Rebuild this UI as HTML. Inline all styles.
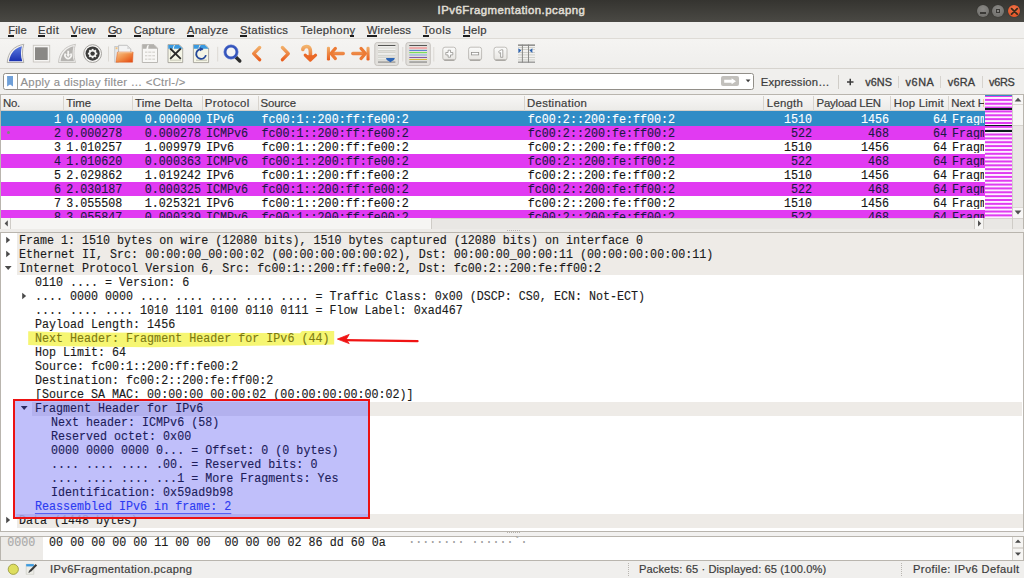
<!DOCTYPE html><html><head><meta charset="utf-8"><style>
*{margin:0;padding:0;box-sizing:border-box}
html,body{width:1024px;height:578px;overflow:hidden;background:#f2f1f0;position:relative}
body{font-family:"Liberation Sans",sans-serif}
.a{position:absolute}
.t{position:absolute;white-space:pre;font-family:"Liberation Sans",sans-serif}
.m{position:absolute;white-space:pre;font-family:"Liberation Mono",monospace;font-size:11.6962px;line-height:14px;-webkit-text-stroke:0.12px currentColor;transform:scaleY(1.1);transform-origin:0 10.12px}
</style></head><body>

<div class="a" style="left:0;top:0;width:1024px;height:22px;background:linear-gradient(#353430,#4a4944)"></div>
<div class="t" style="left:437.6px;top:4.29px;font-size:11.400px;line-height:13.11px;letter-spacing:0.458px;color:#dfdbd2;-webkit-text-stroke:0.55px currentColor;">IPv6Fragmentation.pcapng</div>
<div class="a" style="left:976.5px;top:4.7px;width:12.5px;height:12.5px;border-radius:50%;background:radial-gradient(circle at 50% 35%,#8a8986,#6b6a66);box-shadow:0 0 1px #2a2a28"></div>
<div class="a" style="left:979.5px;top:12px;width:6.5px;height:1.6px;background:#3a3936"></div>
<div class="a" style="left:991.8px;top:4.7px;width:12.5px;height:12.5px;border-radius:50%;background:radial-gradient(circle at 50% 35%,#8a8986,#6b6a66);box-shadow:0 0 1px #2a2a28"></div>
<div class="a" style="left:995.8px;top:8.6px;width:4.6px;height:4.6px;border:1.4px solid #3a3936"></div>
<div class="a" style="left:1007.6px;top:4.7px;width:12.6px;height:12.6px;border-radius:50%;background:radial-gradient(circle at 50% 35%,#f0744a,#df4b1c);box-shadow:0 0 1px #2a2a28"></div>
<svg class="a" style="left:1007.6px;top:4.7px" width="13" height="13"><path d="M3.6 3.6L9.2 9.2M9.2 3.6L3.6 9.2" stroke="#3a2a1a" stroke-width="1.7" stroke-linecap="round"/></svg>
<div class="a" style="left:0;top:22px;width:1024px;height:16.5px;background:#f0efed"></div>
<div class="a" style="left:0;top:38px;width:1024px;height:1px;background:#dedbd6"></div>
<div class="t" style="left:8.25px;top:23.79px;font-size:11.300px;line-height:12.99px;letter-spacing:0.098px;color:#3c3c3c;-webkit-text-stroke:0.2px currentColor;">File</div>
<div class="a" style="left:8.25px;top:35.3px;width:6.00px;height:1.3px;background:#1e1e1e"></div>
<div class="t" style="left:38px;top:23.79px;font-size:11.300px;line-height:12.99px;letter-spacing:0.510px;color:#3c3c3c;-webkit-text-stroke:0.2px currentColor;">Edit</div>
<div class="a" style="left:38.00px;top:35.3px;width:6.64px;height:1.3px;background:#1e1e1e"></div>
<div class="t" style="left:70.5px;top:23.79px;font-size:11.300px;line-height:12.99px;letter-spacing:0.321px;color:#3c3c3c;-webkit-text-stroke:0.2px currentColor;">View</div>
<div class="a" style="left:70.50px;top:35.3px;width:6.64px;height:1.3px;background:#1e1e1e"></div>
<div class="t" style="left:108px;top:23.79px;font-size:11.300px;line-height:12.99px;letter-spacing:-1.073px;color:#3c3c3c;-webkit-text-stroke:0.2px currentColor;">Go</div>
<div class="a" style="left:108.00px;top:35.3px;width:7.89px;height:1.3px;background:#1e1e1e"></div>
<div class="t" style="left:133.75px;top:23.79px;font-size:11.300px;line-height:12.99px;letter-spacing:0.175px;color:#3c3c3c;-webkit-text-stroke:0.2px currentColor;">Capture</div>
<div class="a" style="left:133.75px;top:35.3px;width:7.26px;height:1.3px;background:#1e1e1e"></div>
<div class="t" style="left:187px;top:23.79px;font-size:11.300px;line-height:12.99px;letter-spacing:0.133px;color:#3c3c3c;-webkit-text-stroke:0.2px currentColor;">Analyze</div>
<div class="a" style="left:187.00px;top:35.3px;width:6.64px;height:1.3px;background:#1e1e1e"></div>
<div class="t" style="left:240px;top:23.79px;font-size:11.300px;line-height:12.99px;letter-spacing:0.310px;color:#3c3c3c;-webkit-text-stroke:0.2px currentColor;">Statistics</div>
<div class="a" style="left:240.00px;top:35.3px;width:6.64px;height:1.3px;background:#1e1e1e"></div>
<div class="t" style="left:300.5px;top:23.79px;font-size:11.300px;line-height:12.99px;letter-spacing:0.405px;color:#3c3c3c;-webkit-text-stroke:0.2px currentColor;">Telephony</div>
<div class="a" style="left:349.60px;top:35.3px;width:4.75px;height:1.3px;background:#1e1e1e"></div>
<div class="t" style="left:366.75px;top:23.79px;font-size:11.300px;line-height:12.99px;letter-spacing:0.133px;color:#3c3c3c;-webkit-text-stroke:0.2px currentColor;">Wireless</div>
<div class="a" style="left:366.75px;top:35.3px;width:9.77px;height:1.3px;background:#1e1e1e"></div>
<div class="t" style="left:422.75px;top:23.79px;font-size:11.300px;line-height:12.99px;letter-spacing:0.468px;color:#3c3c3c;-webkit-text-stroke:0.2px currentColor;">Tools</div>
<div class="a" style="left:422.75px;top:35.3px;width:6.00px;height:1.3px;background:#1e1e1e"></div>
<div class="t" style="left:462.75px;top:23.79px;font-size:11.300px;line-height:12.99px;letter-spacing:0.170px;color:#3c3c3c;-webkit-text-stroke:0.2px currentColor;">Help</div>
<div class="a" style="left:462.75px;top:35.3px;width:7.26px;height:1.3px;background:#1e1e1e"></div>
<div class="a" style="left:0;top:39px;width:1024px;height:29px;background:linear-gradient(#f5f4f2,#efeeec)"></div>
<div class="a" style="left:0;top:68px;width:1024px;height:1px;background:#d6d3ce"></div>
<svg class="a" style="left:0;top:0" width="1024" height="70" viewBox="0 0 1024 70">
<defs>
<linearGradient id="gBlue" x1="0" y1="0" x2="0" y2="1"><stop offset="0" stop-color="#5a7ae0"/><stop offset="1" stop-color="#1a30b0"/></linearGradient>
<linearGradient id="gOr" gradientUnits="userSpaceOnUse" x1="0" y1="46" x2="0" y2="61"><stop offset="0" stop-color="#f2b46e"/><stop offset="1" stop-color="#e85a1a"/></linearGradient>
<linearGradient id="gFold" x1="0" y1="0" x2="1" y2="1"><stop offset="0" stop-color="#f6c88e"/><stop offset="0.5" stop-color="#f08a44"/><stop offset="1" stop-color="#e2440e"/></linearGradient>
<linearGradient id="gBtn" x1="0" y1="0" x2="0" y2="1"><stop offset="0" stop-color="#fbfbfa"/><stop offset="1" stop-color="#e6e4e0"/></linearGradient>
</defs>
<!-- shark fin blue -->
<path d="M7.2 62.5 C8 52 14 46 23.8 44.3 C22 50 22 56 23.8 62.5 Z" fill="#f4f3f1" stroke="#a9a7a3" stroke-width="0.9"/>
<path d="M9 61.3 C10.5 52.5 15 48 22 46.2 C20.6 51 20.6 56 22.3 61.3 Z" fill="url(#gBlue)"/>
<!-- stop -->
<rect x="33.3" y="45.3" width="16.4" height="16.7" fill="#f6f5f3" stroke="#c9c6c1" stroke-width="0.9"/>
<rect x="35" y="47.3" width="12.7" height="12.7" fill="#8a8885"/>
<!-- restart shark disabled -->
<path d="M58.5 62.5 C59.3 52 65.3 46 75.5 44.3 C73.5 50 73.5 56 75.5 62.5 Z" fill="#f1f0ee" stroke="#c4c2be" stroke-width="0.9"/>
<path d="M60.5 61.3 C62 52.5 66.5 48 73.6 46.2 C72.2 51 72.2 56 74 61.3 Z" fill="#b6b4b1"/>
<path d="M65.6 53.6 A3.1 3.1 0 1 0 70.6 53.6" fill="none" stroke="#f6f5f3" stroke-width="1.7"/>
<path d="M68.2 50.8 V56.2" stroke="#f6f5f3" stroke-width="1.8"/>
<path d="M66.3 54.3 L68.2 57 L70.1 54.3 Z" fill="#f6f5f3"/>
<!-- gear -->
<circle cx="92.6" cy="53.6" r="8.9" fill="#f7f6f4" stroke="#a4a29e" stroke-width="1"/>
<circle cx="92.6" cy="53.6" r="7.1" fill="#3b3b3a"/>
<g fill="#f4f4f2">
<circle cx="92.6" cy="53.6" r="3.7"/>
<rect x="91.65" y="48.9" width="1.9" height="9.4"/>
<rect x="87.9" y="52.65" width="9.4" height="1.9"/>
<rect x="91.65" y="48.9" width="1.9" height="9.4" transform="rotate(45 92.6 53.6)"/>
<rect x="91.65" y="48.9" width="1.9" height="9.4" transform="rotate(-45 92.6 53.6)"/>
</g>
<circle cx="92.6" cy="53.6" r="2.2" fill="#3b3b3a"/>
<!-- separator -->
<rect x="108" y="46.5" width="1" height="15" fill="#dcd9d4"/>
<!-- open folder -->
<rect x="114.8" y="46.6" width="3.8" height="15.6" fill="#e6e9ec" stroke="#b9bcc0" stroke-width="0.7"/>
<rect x="115.6" y="47.3" width="1.9" height="1.9" fill="#f4c078"/>
<path d="M118.6 45.3 H127.2 L130.8 48.9 V53 H118.6 Z" fill="#f3f3f3" stroke="#b5b5b5" stroke-width="0.8"/>
<path d="M127.2 45.3 V48.9 H130.8 Z" fill="#d9d9d9"/>
<path d="M117.4 52.1 H133.1 L132.6 62.2 H116 Z" fill="url(#gFold)" stroke="#dc5a22" stroke-width="0.5"/>
<path d="M117.8 52.7 H132.5" stroke="#f8d2a8" stroke-width="0.8"/>
<!-- save disabled -->
<path d="M142.3 44.6 H154 L157.5 48.2 V62.5 H142.3 Z" fill="#f8f7f5" stroke="#b4b2ae" stroke-width="0.9"/>
<path d="M142.5 44.8 H147.8 C147 46 146.6 47.2 146.4 48.8 H142.5 Z M149 44.8 H153.8 L157.3 48.3 V48.8 H148.2 C148.2 47.3 148.5 46 149 44.8Z" fill="#b3b1ad"/>
<g fill="#d9d7d3"><rect x="145" y="51.5" width="10" height="1.4"/><rect x="145" y="55" width="10" height="1.4"/><rect x="145" y="58.5" width="10" height="1.4"/>
<rect x="147.3" y="51" width="1" height="9.5" fill="#f7f6f4"/><rect x="151.3" y="51" width="1" height="9.5" fill="#f7f6f4"/></g>
<!-- close file -->
<path d="M168 44.6 H179.2 L182.7 48.1 V62.6 H168 Z" fill="#f5f5e6" stroke="#9a9890" stroke-width="0.8"/>
<path d="M168.3 44.9 H174 C173.4 46 173 47.3 172.8 48.8 H168.3 Z M175 44.9 H179 L182.4 48.3 V48.8 H173.8 C173.9 47.3 174.4 46 175 44.9Z" fill="#3b9ae0"/>
<g fill="#d6d6c6"><rect x="170" y="59.5" width="11" height="1.5"/><rect x="170" y="50.5" width="1" height="10"/></g>
<path d="M170.2 48.5 L180.8 58.8 M180.8 48.5 L170.2 58.8" stroke="#2a2a2a" stroke-width="1.8"/>
<!-- reload file -->
<path d="M193.4 44.6 H205 L208.6 48.1 V62.6 H193.4 Z" fill="#f5f5e6" stroke="#9a9890" stroke-width="0.8"/>
<path d="M193.7 44.9 H199.6 C199 46 198.6 47.3 198.4 48.8 H193.7 Z M200.6 44.9 H204.8 L208.3 48.3 V48.8 H199.4 C199.5 47.3 200 46 200.6 44.9Z" fill="#3b9ae0"/>
<g fill="#d0d0c0"><rect x="196" y="59.5" width="11" height="1.5"/></g>
<path d="M202.6 49.2 A4.9 4.9 0 1 1 196.8 52.4" fill="none" stroke="#24489a" stroke-width="1.8" transform="rotate(90 201.3 53.8)"/>
<path d="M199.5 46.9 L203.6 49 L200 51.3 Z" fill="#24489a"/>
<!-- separator -->
<rect x="217.2" y="46.8" width="1" height="14.7" fill="#dcd9d4"/>
<!-- magnifier -->
<path d="M236 57.2 L239.8 61" stroke="#2e2e2e" stroke-width="3.4" stroke-linecap="round"/>
<circle cx="231" cy="52" r="5.9" fill="#f4f4f4" stroke="#3555bc" stroke-width="2.7"/>
<circle cx="231" cy="52" r="7.2" fill="none" stroke="#6f86d6" stroke-width="0.5"/>
<!-- back / forward -->
<path d="M259.6 47.5 L253.7 53.6 L259.6 59.7" fill="none" stroke="url(#gOr)" stroke-width="3.3" stroke-linecap="round" stroke-linejoin="round"/>
<path d="M282.4 47.5 L288.3 53.6 L282.4 59.7" fill="none" stroke="url(#gOr)" stroke-width="3.3" stroke-linecap="round" stroke-linejoin="round"/>
<!-- jump -->
<path d="M302.8 49.4 C303.4 45.8 309 45.2 310.1 49.2 C310.7 51.4 310.4 55 310.3 58" fill="none" stroke="url(#gOr)" stroke-width="3.6" stroke-linecap="round"/>
<path d="M305.2 55.2 L310.3 60.2 L315.6 55.2" fill="#ea6826" stroke="#ea6826" stroke-width="3.1" stroke-linecap="round" stroke-linejoin="round"/>
<!-- go first -->
<rect x="326.9" y="46.8" width="3.1" height="13.8" rx="1.3" fill="url(#gOr)"/>
<path d="M332 53.5 H343.3" stroke="url(#gOr)" stroke-width="3.3" stroke-linecap="round"/>
<path d="M335.4 48.4 L330.9 53.5 L335.4 58.6" fill="none" stroke="#ec7a34" stroke-width="3.1" stroke-linecap="round" stroke-linejoin="round"/>
<!-- go last -->
<rect x="366.5" y="46.8" width="3.1" height="13.8" rx="1.3" fill="url(#gOr)"/>
<path d="M352.8 53.5 H364" stroke="url(#gOr)" stroke-width="3.3" stroke-linecap="round"/>
<path d="M361 48.4 L365.5 53.5 L361 58.6" fill="none" stroke="#ec7a34" stroke-width="3.1" stroke-linecap="round" stroke-linejoin="round"/>
<!-- autoscroll pressed -->
<rect x="374.8" y="42.5" width="23.6" height="23" rx="2.5" fill="#e2e0dc" stroke="#c3c0bb" stroke-width="0.9"/>
<rect x="378" y="45" width="17.4" height="1" fill="#555553"/>
<g fill="#cfd0c9"><rect x="378" y="47.6" width="17.4" height="0.9"/><rect x="378" y="50.2" width="17.4" height="0.9"/><rect x="378" y="52.2" width="17.4" height="0.9"/><rect x="378" y="54.8" width="17.4" height="0.9"/><rect x="378" y="57.3" width="17.4" height="0.9"/><rect x="378" y="59.3" width="17.4" height="0.9"/></g>
<g fill="#f2f2f0"><rect x="378" y="46.2" width="17.4" height="1.2"/><rect x="378" y="48.6" width="17.4" height="1.4"/><rect x="378" y="53.2" width="17.4" height="1.4"/><rect x="378" y="58.3" width="17.4" height="0.9"/></g>
<rect x="378" y="61.4" width="17.4" height="1.4" fill="#9a9a98"/>
<path d="M386 57.9 H394.8 C394.6 59.5 393.6 60.4 392.2 61 L390.4 62.3 L388.6 61 C387.2 60.4 386.2 59.5 386 57.9 Z" fill="#2f66b6"/>
<!-- separator -->
<rect x="402.3" y="47" width="1" height="14.5" fill="#dcd9d4"/>
<!-- colorize pressed -->
<rect x="405.9" y="42.5" width="24.4" height="23" rx="2.5" fill="#e2e0dc" stroke="#c3c0bb" stroke-width="0.9"/>
<rect x="409.3" y="45" width="17.7" height="1" fill="#555553"/>
<rect x="409.3" y="47.2" width="17.7" height="1.6" fill="#f2a0a0"/>
<rect x="409.3" y="49.9" width="17.7" height="1" fill="#4f7ed0"/>
<rect x="409.3" y="52.1" width="17.7" height="1" fill="#6ee04c"/>
<rect x="409.3" y="54.2" width="17.7" height="1.6" fill="#a6bfe0"/>
<rect x="409.3" y="57" width="17.7" height="1" fill="#8a5aa2"/>
<rect x="409.3" y="59" width="17.7" height="1" fill="#d6b83a"/>
<rect x="409.3" y="61.3" width="17.7" height="1.5" fill="#9a9a98"/>
<!-- separator -->
<rect x="433.3" y="47" width="1" height="14.5" fill="#dcd9d4"/>
<!-- zoom in/out/normal -->
<rect x="442.8" y="47.2" width="13" height="13" rx="2.2" fill="url(#gBtn)" stroke="#b3b0ab" stroke-width="0.8"/>
<path d="M444.2 60.1 H454.4" stroke="#8c8a86" stroke-width="0.9"/>
<path d="M448.1 50.2 H450.5 V52.5 H452.8 V54.9 H450.5 V57.2 H448.1 V54.9 H445.8 V52.5 H448.1 Z" fill="#fdfdfd" stroke="#8f8d89" stroke-width="0.75"/>
<rect x="468.6" y="47.2" width="13" height="13" rx="2.2" fill="url(#gBtn)" stroke="#b3b0ab" stroke-width="0.8"/>
<path d="M470 60.1 H480.2" stroke="#8c8a86" stroke-width="0.9"/>
<rect x="471.5" y="52.4" width="7.2" height="2.5" fill="#fdfdfd" stroke="#8f8d89" stroke-width="0.75"/>
<rect x="494" y="47.2" width="13" height="13" rx="2.2" fill="url(#gBtn)" stroke="#b3b0ab" stroke-width="0.8"/>
<path d="M495.4 60.1 H505.6" stroke="#8c8a86" stroke-width="0.9"/>
<path d="M498.6 51.6 L501.2 49.8 H502.8 V57.3 H500.6 V52.6 L499.6 53.3 Z" fill="#fdfdfd" stroke="#8f8d89" stroke-width="0.75"/>
<!-- resize columns -->
<rect x="518" y="44.6" width="17" height="1" fill="#555553"/>
<g fill="#c8c9c2"><rect x="518" y="47" width="17" height="0.8"/><rect x="518" y="49" width="17" height="0.8"/><rect x="518" y="52" width="17" height="0.8"/><rect x="518" y="54.5" width="17" height="0.8"/><rect x="518" y="57" width="17" height="0.8"/><rect x="518" y="59.5" width="17" height="0.8"/></g>
<rect x="518" y="61.5" width="17" height="1.4" fill="#9a9a98"/>
<rect x="521.9" y="44.6" width="1" height="18" fill="#8a8a88"/>
<rect x="528" y="44.6" width="1" height="18" fill="#8a8a88"/>
<path d="M518.4 48.3 L521.4 50.6 L518.4 52.9 Z" fill="#2f64b0"/>
<path d="M532.4 48.3 L529.4 50.6 L532.4 52.9 Z" fill="#2f64b0"/>
</svg>
<div class="a" style="left:0;top:69px;width:1024px;height:25px;background:#f0efed"></div>
<div class="a" style="left:3.3px;top:73px;width:750.5px;height:16.8px;background:#fff;border:1px solid #928f89;border-radius:2.5px"></div>
<div class="a" style="left:16.9px;top:74px;width:0.9px;height:15px;background:#a09d97"></div>
<svg class="a" style="left:6px;top:75px" width="9" height="13"><path d="M1.1 1H7V11.4L4.05 9.6L1.1 11.4Z" fill="#6f9fd8"/></svg>
<div class="t" style="left:20.5px;top:75.89px;font-size:11.300px;line-height:12.99px;letter-spacing:0.289px;color:#909090;-webkit-text-stroke:0.15px currentColor;">Apply a display filter … &lt;Ctrl-/&gt;</div>
<div class="a" style="left:721px;top:75.9px;width:18px;height:10.4px;background:#c2c0bc;border-radius:2px"></div>
<svg class="a" style="left:721px;top:75.9px" width="18" height="11"><path d="M3.2 3.8H10.6V2.2L15 5.2L10.6 8.3V6.8H3.2Z" fill="#fff"/></svg>
<svg class="a" style="left:745px;top:79px" width="7" height="5"><path d="M0.7 0.4H5.5L3.1 3.3Z" fill="#3c3c3c"/></svg>
<div class="t" style="left:760.8px;top:75.99px;font-size:11.300px;line-height:12.99px;letter-spacing:0.150px;color:#3c3c3c;-webkit-text-stroke:0.2px currentColor;">Expression…</div>
<div class="a" style="left:838px;top:75px;width:1px;height:14px;background:#d0cdc8"></div>
<svg class="a" style="left:846px;top:78px" width="9" height="9"><path d="M1 4H7.5M4.25 0.8V7.3" stroke="#3c3c3c" stroke-width="1.5"/></svg>
<div class="t" style="left:865.2px;top:76.45px;font-size:10.900px;line-height:12.54px;letter-spacing:0.082px;color:#3c3c3c;-webkit-text-stroke:0.3px currentColor;">v6NS</div>
<div class="t" style="left:905.6px;top:76.45px;font-size:10.900px;line-height:12.54px;letter-spacing:0.515px;color:#3c3c3c;-webkit-text-stroke:0.3px currentColor;">v6NA</div>
<div class="t" style="left:947.8px;top:76.45px;font-size:10.900px;line-height:12.54px;letter-spacing:0.215px;color:#3c3c3c;-webkit-text-stroke:0.3px currentColor;">v6RA</div>
<div class="t" style="left:989.1px;top:76.45px;font-size:10.900px;line-height:12.54px;letter-spacing:-0.351px;color:#3c3c3c;-webkit-text-stroke:0.3px currentColor;">v6RS</div>
<div class="a" style="left:897.9px;top:76px;width:1px;height:12px;background:#d6d3ce"></div>
<div class="a" style="left:940.1px;top:76px;width:1px;height:12px;background:#d6d3ce"></div>
<div class="a" style="left:981.8px;top:76px;width:1px;height:12px;background:#d6d3ce"></div>
<div class="a" style="left:0;top:94px;width:1024px;height:135px;background:#fff;border:1px solid #b9b5ae;border-bottom:none"></div>
<div class="a" style="left:1px;top:95px;width:984px;height:16px;background:linear-gradient(#f8f7f6,#ecebe8);border-bottom:1px solid #d4d0ca"></div>
<div class="a" style="left:62.9px;top:96px;width:1px;height:15px;background:#d8d4ce"></div>
<div class="a" style="left:132.1px;top:96px;width:1px;height:15px;background:#d8d4ce"></div>
<div class="a" style="left:201.7px;top:96px;width:1px;height:15px;background:#d8d4ce"></div>
<div class="a" style="left:257.9px;top:96px;width:1px;height:15px;background:#d8d4ce"></div>
<div class="a" style="left:524.0px;top:96px;width:1px;height:15px;background:#d8d4ce"></div>
<div class="a" style="left:762.5px;top:96px;width:1px;height:15px;background:#d8d4ce"></div>
<div class="a" style="left:813.0px;top:96px;width:1px;height:15px;background:#d8d4ce"></div>
<div class="a" style="left:890.0px;top:96px;width:1px;height:15px;background:#d8d4ce"></div>
<div class="a" style="left:947.5px;top:96px;width:1px;height:15px;background:#d8d4ce"></div>
<div class="t" style="left:3px;top:97.49px;font-size:11.400px;line-height:13.11px;letter-spacing:-0.220px;color:#3c3c3c;-webkit-text-stroke:0.2px currentColor;">No.</div>
<div class="t" style="left:66.2px;top:97.49px;font-size:11.400px;line-height:13.11px;letter-spacing:-0.003px;color:#3c3c3c;-webkit-text-stroke:0.2px currentColor;">Time</div>
<div class="t" style="left:134.9px;top:97.49px;font-size:11.400px;line-height:13.11px;letter-spacing:0.301px;color:#3c3c3c;-webkit-text-stroke:0.2px currentColor;">Time Delta</div>
<div class="t" style="left:204.8px;top:97.49px;font-size:11.400px;line-height:13.11px;letter-spacing:0.383px;color:#3c3c3c;-webkit-text-stroke:0.2px currentColor;">Protocol</div>
<div class="t" style="left:260.5px;top:97.49px;font-size:11.400px;line-height:13.11px;letter-spacing:-0.124px;color:#3c3c3c;-webkit-text-stroke:0.2px currentColor;">Source</div>
<div class="t" style="left:527px;top:97.49px;font-size:11.400px;line-height:13.11px;letter-spacing:0.297px;color:#3c3c3c;-webkit-text-stroke:0.2px currentColor;">Destination</div>
<div class="t" style="left:766.8px;top:97.49px;font-size:11.400px;line-height:13.11px;letter-spacing:0.247px;color:#3c3c3c;-webkit-text-stroke:0.2px currentColor;">Length</div>
<div class="t" style="left:816.6px;top:97.49px;font-size:11.400px;line-height:13.11px;letter-spacing:-0.204px;color:#3c3c3c;-webkit-text-stroke:0.2px currentColor;">Payload LEN</div>
<div class="t" style="left:893.8px;top:97.49px;font-size:11.400px;line-height:13.11px;letter-spacing:0.207px;color:#3c3c3c;-webkit-text-stroke:0.2px currentColor;">Hop Limit</div>
<div class="t" style="left:951.2px;top:97.49px;font-size:11.400px;line-height:13.11px;letter-spacing:0.000px;color:#3c3c3c;-webkit-text-stroke:0.2px currentColor;width:33px;overflow:hidden;">Next H</div>
<div class="a" style="left:1px;top:111px;width:984px;height:106.6px;overflow:hidden">
<div class="a" style="left:0;top:0px;width:984px;height:14.5px;background:#308cc6"></div>
<div class="m" style="left:52.980000000000004px;top:2.28px;color:#ffffff;">1</div>
<div class="m" style="left:65.2px;top:2.28px;color:#ffffff;">0.000000</div>
<div class="m" style="left:143.84px;top:2.28px;color:#ffffff;">0.000000</div>
<div class="m" style="left:205px;top:2.28px;color:#ffffff;">IPv6</div>
<div class="m" style="left:260.5px;top:2.28px;color:#ffffff;">fc00:1::200:ff:fe00:2</div>
<div class="m" style="left:526.8px;top:2.28px;color:#ffffff;">fc00:2::200:fe:ff00:2</div>
<div class="m" style="left:782.92px;top:2.28px;color:#ffffff;">1510</div>
<div class="m" style="left:859.92px;top:2.28px;color:#ffffff;">1456</div>
<div class="m" style="left:931.96px;top:2.28px;color:#ffffff;">64</div>
<div class="a" style="left:950px;top:0px;width:33px;height:14px;overflow:hidden">
<div class="m" style="left:1px;top:1.78px;color:#ffffff;">Fragm</div>
</div>
<div class="a" style="left:0;top:14.5px;width:984px;height:14px;background:#e13af2"></div>
<div class="m" style="left:52.980000000000004px;top:16.28px;color:#1c1846;">2</div>
<div class="m" style="left:65.2px;top:16.28px;color:#1c1846;">0.000278</div>
<div class="m" style="left:143.84px;top:16.28px;color:#1c1846;">0.000278</div>
<div class="m" style="left:205px;top:16.28px;color:#1c1846;">ICMPv6</div>
<div class="m" style="left:260.5px;top:16.28px;color:#1c1846;">fc00:1::200:ff:fe00:2</div>
<div class="m" style="left:526.8px;top:16.28px;color:#1c1846;">fc00:2::200:fe:ff00:2</div>
<div class="m" style="left:789.94px;top:16.28px;color:#1c1846;">522</div>
<div class="m" style="left:866.94px;top:16.28px;color:#1c1846;">468</div>
<div class="m" style="left:931.96px;top:16.28px;color:#1c1846;">64</div>
<div class="a" style="left:950px;top:14px;width:33px;height:14px;overflow:hidden">
<div class="m" style="left:1px;top:1.78px;color:#1c1846;">Fragm</div>
</div>
<div class="a" style="left:0;top:28.5px;width:984px;height:14px;background:#ffffff"></div>
<div class="m" style="left:52.980000000000004px;top:30.28px;color:#141414;">3</div>
<div class="m" style="left:65.2px;top:30.28px;color:#141414;">1.010257</div>
<div class="m" style="left:143.84px;top:30.28px;color:#141414;">1.009979</div>
<div class="m" style="left:205px;top:30.28px;color:#141414;">IPv6</div>
<div class="m" style="left:260.5px;top:30.28px;color:#141414;">fc00:1::200:ff:fe00:2</div>
<div class="m" style="left:526.8px;top:30.28px;color:#141414;">fc00:2::200:fe:ff00:2</div>
<div class="m" style="left:782.92px;top:30.28px;color:#141414;">1510</div>
<div class="m" style="left:859.92px;top:30.28px;color:#141414;">1456</div>
<div class="m" style="left:931.96px;top:30.28px;color:#141414;">64</div>
<div class="a" style="left:950px;top:28px;width:33px;height:14px;overflow:hidden">
<div class="m" style="left:1px;top:1.78px;color:#141414;">Fragm</div>
</div>
<div class="a" style="left:0;top:42.5px;width:984px;height:14px;background:#e13af2"></div>
<div class="m" style="left:52.980000000000004px;top:44.28px;color:#1c1846;">4</div>
<div class="m" style="left:65.2px;top:44.28px;color:#1c1846;">1.010620</div>
<div class="m" style="left:143.84px;top:44.28px;color:#1c1846;">0.000363</div>
<div class="m" style="left:205px;top:44.28px;color:#1c1846;">ICMPv6</div>
<div class="m" style="left:260.5px;top:44.28px;color:#1c1846;">fc00:1::200:ff:fe00:2</div>
<div class="m" style="left:526.8px;top:44.28px;color:#1c1846;">fc00:2::200:fe:ff00:2</div>
<div class="m" style="left:789.94px;top:44.28px;color:#1c1846;">522</div>
<div class="m" style="left:866.94px;top:44.28px;color:#1c1846;">468</div>
<div class="m" style="left:931.96px;top:44.28px;color:#1c1846;">64</div>
<div class="a" style="left:950px;top:42px;width:33px;height:14px;overflow:hidden">
<div class="m" style="left:1px;top:1.78px;color:#1c1846;">Fragm</div>
</div>
<div class="a" style="left:0;top:56.5px;width:984px;height:14px;background:#ffffff"></div>
<div class="m" style="left:52.980000000000004px;top:58.28px;color:#141414;">5</div>
<div class="m" style="left:65.2px;top:58.28px;color:#141414;">2.029862</div>
<div class="m" style="left:143.84px;top:58.28px;color:#141414;">1.019242</div>
<div class="m" style="left:205px;top:58.28px;color:#141414;">IPv6</div>
<div class="m" style="left:260.5px;top:58.28px;color:#141414;">fc00:1::200:ff:fe00:2</div>
<div class="m" style="left:526.8px;top:58.28px;color:#141414;">fc00:2::200:fe:ff00:2</div>
<div class="m" style="left:782.92px;top:58.28px;color:#141414;">1510</div>
<div class="m" style="left:859.92px;top:58.28px;color:#141414;">1456</div>
<div class="m" style="left:931.96px;top:58.28px;color:#141414;">64</div>
<div class="a" style="left:950px;top:56px;width:33px;height:14px;overflow:hidden">
<div class="m" style="left:1px;top:1.78px;color:#141414;">Fragm</div>
</div>
<div class="a" style="left:0;top:70.5px;width:984px;height:14px;background:#e13af2"></div>
<div class="m" style="left:52.980000000000004px;top:72.28px;color:#1c1846;">6</div>
<div class="m" style="left:65.2px;top:72.28px;color:#1c1846;">2.030187</div>
<div class="m" style="left:143.84px;top:72.28px;color:#1c1846;">0.000325</div>
<div class="m" style="left:205px;top:72.28px;color:#1c1846;">ICMPv6</div>
<div class="m" style="left:260.5px;top:72.28px;color:#1c1846;">fc00:1::200:ff:fe00:2</div>
<div class="m" style="left:526.8px;top:72.28px;color:#1c1846;">fc00:2::200:fe:ff00:2</div>
<div class="m" style="left:789.94px;top:72.28px;color:#1c1846;">522</div>
<div class="m" style="left:866.94px;top:72.28px;color:#1c1846;">468</div>
<div class="m" style="left:931.96px;top:72.28px;color:#1c1846;">64</div>
<div class="a" style="left:950px;top:70px;width:33px;height:14px;overflow:hidden">
<div class="m" style="left:1px;top:1.78px;color:#1c1846;">Fragm</div>
</div>
<div class="a" style="left:0;top:84.5px;width:984px;height:14px;background:#ffffff"></div>
<div class="m" style="left:52.980000000000004px;top:86.28px;color:#141414;">7</div>
<div class="m" style="left:65.2px;top:86.28px;color:#141414;">3.055508</div>
<div class="m" style="left:143.84px;top:86.28px;color:#141414;">1.025321</div>
<div class="m" style="left:205px;top:86.28px;color:#141414;">IPv6</div>
<div class="m" style="left:260.5px;top:86.28px;color:#141414;">fc00:1::200:ff:fe00:2</div>
<div class="m" style="left:526.8px;top:86.28px;color:#141414;">fc00:2::200:fe:ff00:2</div>
<div class="m" style="left:782.92px;top:86.28px;color:#141414;">1510</div>
<div class="m" style="left:859.92px;top:86.28px;color:#141414;">1456</div>
<div class="m" style="left:931.96px;top:86.28px;color:#141414;">64</div>
<div class="a" style="left:950px;top:84px;width:33px;height:14px;overflow:hidden">
<div class="m" style="left:1px;top:1.78px;color:#141414;">Fragm</div>
</div>
<div class="a" style="left:0;top:98.5px;width:984px;height:14px;background:#e13af2"></div>
<div class="m" style="left:52.980000000000004px;top:100.28px;color:#1c1846;">8</div>
<div class="m" style="left:65.2px;top:100.28px;color:#1c1846;">3.055847</div>
<div class="m" style="left:143.84px;top:100.28px;color:#1c1846;">0.000339</div>
<div class="m" style="left:205px;top:100.28px;color:#1c1846;">ICMPv6</div>
<div class="m" style="left:260.5px;top:100.28px;color:#1c1846;">fc00:1::200:ff:fe00:2</div>
<div class="m" style="left:526.8px;top:100.28px;color:#1c1846;">fc00:2::200:fe:ff00:2</div>
<div class="m" style="left:789.94px;top:100.28px;color:#1c1846;">522</div>
<div class="m" style="left:866.94px;top:100.28px;color:#1c1846;">468</div>
<div class="m" style="left:931.96px;top:100.28px;color:#1c1846;">64</div>
<div class="a" style="left:950px;top:98px;width:33px;height:14px;overflow:hidden">
<div class="m" style="left:1px;top:1.78px;color:#1c1846;">Fragm</div>
</div>
</div>
<div class="a" style="left:985px;top:95px;width:27px;height:122.6px;background:repeating-linear-gradient(#ec9af6 0px,#e13af2 0.55px,#e13af2 1.55px,#fcf0fd 2.5px,#fcf0fd 3.45px,#ec9af6 3.85px);"></div>
<div class="a" style="left:985px;top:95px;width:27px;height:1px;background:#308cc6"></div>
<div class="a" style="left:985px;top:107.8px;width:27px;height:1.8px;background:#0c1c1c;box-shadow:0 0 0.6px #301040"></div>
<div class="a" style="left:985px;top:124.7px;width:27px;height:1.8px;background:#0c1c1c;box-shadow:0 0 0.6px #301040"></div>
<div class="a" style="left:985px;top:129.9px;width:27px;height:1.8px;background:#0c1c1c;box-shadow:0 0 0.6px #301040"></div>
<div class="a" style="left:1012px;top:95px;width:11px;height:122.6px;background:#e9e7e4;border-left:1px solid #d2cfca"></div>
<div class="a" style="left:1013px;top:95px;width:10px;height:10px;background:#f8f7f6;border-bottom:1px solid #dcd9d4"></div>
<svg class="a" style="left:1013px;top:95px" width="10" height="10"><path d="M1.6 6.6H8.4L5 2.8Z" fill="#505050"/></svg>
<div class="a" style="left:1013px;top:105px;width:10px;height:21px;background:#f6f5f3;border-bottom:1px solid #d6d3ce"></div>
<div class="a" style="left:1013px;top:207px;width:10px;height:10.5px;background:#f8f7f6;border-top:1px solid #dcd9d4"></div>
<svg class="a" style="left:1013px;top:207px" width="10" height="10"><path d="M1.6 3.6H8.4L5 7.4Z" fill="#505050"/></svg>
<div class="a" style="left:1px;top:217.6px;width:1022px;height:11px;background:#e9e7e4;border-top:1px solid #d6d3ce"></div>
<div class="a" style="left:1px;top:218.4px;width:10px;height:10.2px;background:#f6f5f3;border-right:1px solid #cfccc7"></div>
<svg class="a" style="left:1px;top:218px" width="10" height="11"><path d="M6.8 2.2V8.6L3.6 5.4Z" fill="#505050"/></svg>
<div class="a" style="left:11px;top:218.4px;width:420.5px;height:10.2px;background:#f6f5f3;border-right:1px solid #cfccc7"></div>
<div class="a" style="left:973.5px;top:218.4px;width:10.7px;height:10.2px;background:#f6f5f3;border-left:1px solid #cfccc7;border-right:1px solid #cfccc7"></div>
<svg class="a" style="left:973.5px;top:218px" width="11" height="11"><path d="M4 2.2V8.6L7.2 5.4Z" fill="#505050"/></svg>
<div class="a" style="left:1012px;top:218.4px;width:1px;height:10.2px;background:#cfccc7"></div>
<div class="a" style="left:0;top:228.6px;width:1024px;height:3.4px;background:#edebe8"></div>
<div class="a" style="left:507px;top:230px;width:13px;height:1px;border-top:1px dotted #b5b2ac"></div>
<div class="a" style="left:6.6px;top:130.6px;width:3px;height:3px;border-radius:50%;background:#7e8a7e"></div>
<div class="a" style="left:0;top:232px;width:1024px;height:300px;background:#fff;border:1px solid #b9b5ae"></div>
<div class="a" style="left:16.5px;top:233px;width:1006px;height:42px;background:#eeebe7"></div>
<div class="a" style="left:16.5px;top:514px;width:1006px;height:14px;background:#eeebe7"></div>
<div class="a" style="left:32px;top:401.5px;width:990px;height:14px;background:#eeebe7"></div>
<div class="a" style="left:15px;top:401px;width:353px;height:116px;background:#c0bffa"></div>
<div class="a" style="left:32px;top:402px;width:336px;height:13.5px;background:#b3b1ee"></div>
<div class="a" style="left:16.5px;top:514px;width:352px;height:3px;background:#b3b1ee"></div>
<svg class="a" style="left:0;top:0" width="1024" height="578"><path d="M28.2 331.2 L70 332.6 L300 333.2 L302 331 L334.2 330.9 L334.2 344.5 L300 345.2 L150 347.2 L60 346.3 L28.2 345 Z" fill="#f6f672"/></svg>
<div class="m" style="left:18.900000000000002px;top:234.28px;color:#1a1a1a;">Frame 1: 1510 bytes on wire (12080 bits), 1510 bytes captured (12080 bits) on interface 0</div>
<div class="m" style="left:18.900000000000002px;top:248.28px;color:#1a1a1a;">Ethernet II, Src: 00:00:00_00:00:02 (00:00:00:00:00:02), Dst: 00:00:00_00:00:11 (00:00:00:00:00:11)</div>
<div class="m" style="left:18.900000000000002px;top:262.28px;color:#1a1a1a;">Internet Protocol Version 6, Src: fc00:1::200:ff:fe00:2, Dst: fc00:2::200:fe:ff00:2</div>
<div class="m" style="left:34.9px;top:276.28px;color:#1a1a1a;">0110 .... = Version: 6</div>
<div class="m" style="left:34.9px;top:290.28px;color:#1a1a1a;">.... 0000 0000 .... .... .... .... .... = Traffic Class: 0x00 (DSCP: CS0, ECN: Not-ECT)</div>
<div class="m" style="left:34.9px;top:304.28px;color:#1a1a1a;">.... .... .... 1010 1101 0100 0110 0111 = Flow Label: 0xad467</div>
<div class="m" style="left:34.9px;top:318.28px;color:#1a1a1a;">Payload Length: 1456</div>
<div class="m" style="left:34.9px;top:332.28px;color:#7d7a12;">Next Header: Fragment Header for IPv6 (44)</div>
<div class="m" style="left:34.9px;top:346.28px;color:#1a1a1a;">Hop Limit: 64</div>
<div class="m" style="left:34.9px;top:360.28px;color:#1a1a1a;">Source: fc00:1::200:ff:fe00:2</div>
<div class="m" style="left:34.9px;top:374.28px;color:#1a1a1a;">Destination: fc00:2::200:fe:ff00:2</div>
<div class="m" style="left:34.9px;top:388.28px;color:#1a1a1a;">[Source SA MAC: 00:00:00_00:00:02 (00:00:00:00:00:02)]</div>
<div class="m" style="left:34.9px;top:402.28px;color:#1c1c5a;">Fragment Header for IPv6</div>
<div class="m" style="left:50.9px;top:416.28px;color:#1c1c5a;">Next header: ICMPv6 (58)</div>
<div class="m" style="left:50.9px;top:430.28px;color:#1c1c5a;">Reserved octet: 0x00</div>
<div class="m" style="left:50.9px;top:444.28px;color:#1c1c5a;">0000 0000 0000 0... = Offset: 0 (0 bytes)</div>
<div class="m" style="left:50.9px;top:458.28px;color:#1c1c5a;">.... .... .... .00. = Reserved bits: 0</div>
<div class="m" style="left:50.9px;top:472.28px;color:#1c1c5a;">.... .... .... ...1 = More Fragments: Yes</div>
<div class="m" style="left:50.9px;top:486.28px;color:#1c1c5a;">Identification: 0x59ad9b98</div>
<div class="m" style="left:34.9px;top:500.28px;color:#2b3af2;text-decoration:underline;text-underline-offset:2.5px;text-decoration-thickness:1px;">Reassembled IPv6 in frame: 2</div>
<div class="m" style="left:18.900000000000002px;top:514.28px;color:#1a1a1a;">Data (1448 bytes)</div>
<svg class="a" style="left:0;top:0" width="1024" height="578"><g fill="#4a4a4a"><path d="M6.2 236.7L10.2 240L6.2 243.3Z"/><path d="M6.2 250.7L10.2 254L6.2 257.3Z"/><path d="M4.8 266.0H11.6L8.2 270.1Z"/><path d="M22.2 292.7L26.2 296L22.2 299.3Z"/><path fill="#2a2a62" d="M20.8 406.0H27.6L24.2 410.1Z"/><path d="M6.2 516.7L10.2 520L6.2 523.3Z"/></g></svg>
<div class="a" style="left:16px;top:514px;width:352px;height:3.2px;background:rgba(176,174,238,0.85)"></div>
<div class="a" style="left:13.1px;top:399.4px;width:357px;height:120px;border:2.5px solid #ec1212"></div>
<svg class="a" style="left:0;top:0" width="1024" height="578"><path d="M344 340.1L417.5 341.2" stroke="#f01414" stroke-width="2.3" stroke-linecap="round" fill="none"/><path d="M337.4 339.1L349.2 334.4L346.2 339.4L349.2 343.6Z" fill="#f01414" stroke="#f01414" stroke-width="0.8" stroke-linejoin="round"/></svg>
<div class="a" style="left:0;top:535.5px;width:1024px;height:25px;background:#fff;border:1px solid #b9b5ae"></div>
<div class="a" style="left:1px;top:536.5px;width:42px;height:23px;background:#edebe8"></div>
<div class="a" style="left:1012.3px;top:536.5px;width:10.7px;height:23px;background:#f7f6f4;border-left:1px solid #d6d3ce"></div>
<div class="a" style="left:1013px;top:546.8px;width:10px;height:1px;background:#dcd9d4"></div>
<div class="a" style="left:1013px;top:548.3px;width:10px;height:1px;background:#dcd9d4"></div>
<svg class="a" style="left:1013px;top:536px" width="10" height="24"><path d="M2 6.8H8L5 3.6Z" fill="#4a4a4a"/><path d="M2 16.6H8L5 19.8Z" fill="#4a4a4a"/></svg>
<div class="m" style="left:7.300000000000001px;top:536.28px;color:#a9a9a9;">0000</div>
<div class="m" style="left:49.1px;top:536.28px;color:#1a1a1a;">00 00 00 00 00 11 00 00  00 00 00 02 86 dd 60 0a</div>
<div class="m" style="left:408.3px;top:536.28px;color:#9a9a9a;">········ ······`·</div>
<div class="a" style="left:507px;top:532px;width:13px;height:1px;border-top:1px dotted #b5b2ac"></div>
<div class="a" style="left:0;top:560.5px;width:1024px;height:17.5px;background:#f0efed"></div>
<svg class="a" style="left:0;top:556px" width="60" height="22"><circle cx="13.3" cy="13.3" r="5.1" fill="#dede5e" stroke="#9c9c3e" stroke-width="0.9"/><path d="M26.2 8.2H33.8V18.3H26.2Z" fill="#ecece6" stroke="#c8c8c0" stroke-width="0.6"/><path d="M26.2 8.1H33.8V10.4H26.2Z" fill="#3a9ae0"/><path d="M36.4 8.7L30 15.3" stroke="#3a3a3a" stroke-width="2"/><path d="M30 15.3L29 16.6L29.4 15Z" fill="#3a3a3a" stroke="#3a3a3a" stroke-width="0.8"/></svg>
<div class="t" style="left:50.1px;top:563.47px;font-size:11.100px;line-height:12.76px;letter-spacing:0.380px;color:#3c3c3c;-webkit-text-stroke:0.2px currentColor;">IPv6Fragmentation.pcapng</div>
<div class="t" style="left:639px;top:563.47px;font-size:11.100px;line-height:12.76px;letter-spacing:0.113px;color:#3c3c3c;-webkit-text-stroke:0.2px currentColor;">Packets: 65 · Displayed: 65 (100.0%)</div>
<div class="a" style="left:627.5px;top:563px;width:1px;height:13px;border-left:1px dotted #b8b5b0"></div>
<div class="a" style="left:900.5px;top:563px;width:1px;height:13px;border-left:1px dotted #b8b5b0"></div>
<div class="t" style="left:913px;top:563.47px;font-size:11.100px;line-height:12.76px;letter-spacing:0.405px;color:#3c3c3c;-webkit-text-stroke:0.2px currentColor;">Profile: IPv6 Default</div>
</body></html>
